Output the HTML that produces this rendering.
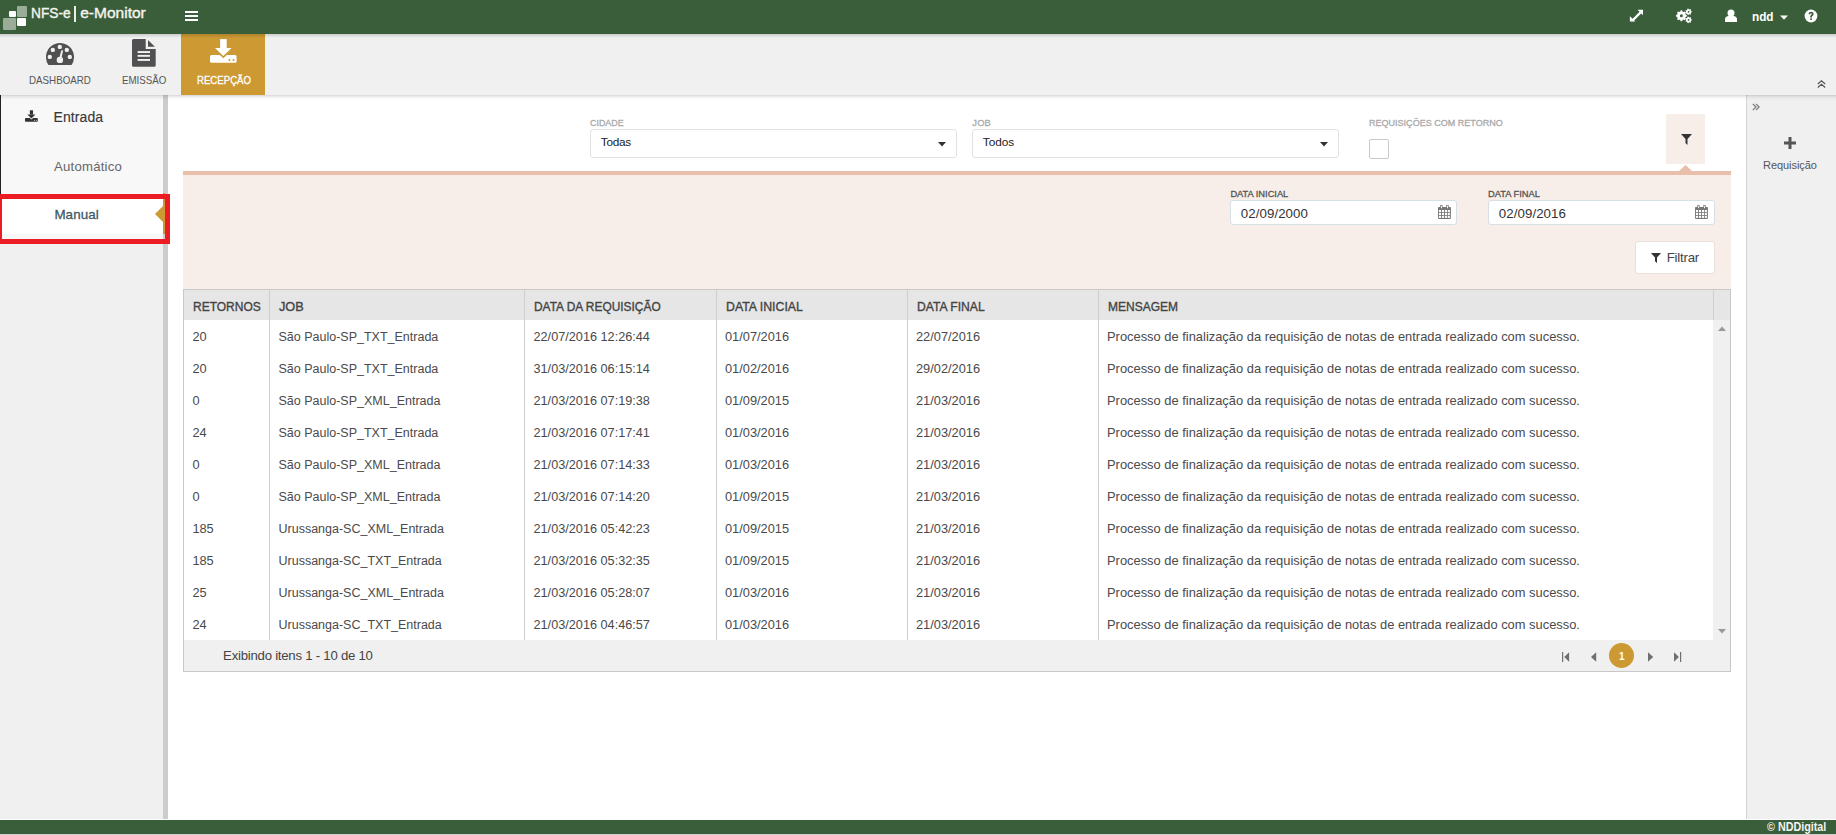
<!DOCTYPE html>
<html><head><meta charset="utf-8"><title>NFS-e | e-Monitor</title>
<style>
html,body{margin:0;padding:0;width:1836px;height:835px;overflow:hidden;background:#fff;font-family:"Liberation Sans",sans-serif;position:relative}
body>div{position:absolute}
.t{white-space:nowrap}
</style></head><body>
<div style="left:0px;top:0px;width:1836px;height:34px;background:#3a5e39"></div>
<div style="left:17px;top:6px;width:10px;height:11px;background:#9aad98;border-radius:1px"></div>
<div style="left:9px;top:11px;width:7px;height:6px;background:#fff;border-radius:1px"></div>
<div style="left:3px;top:18px;width:13px;height:12px;background:#9aad98;border-radius:1px"></div>
<div style="left:17px;top:18px;width:9px;height:8px;background:#fff;border-radius:1px"></div>
<div class="t" style="left:30.6px;top:2.63px;font-size:15.5px;line-height:20px;font-weight:normal;color:#f4f4f0;transform:scaleX(0.8850);transform-origin:0 0;-webkit-text-stroke:0.4px #f4f4f0">NFS-e</div>
<div style="left:74.4px;top:6px;width:1.6px;height:16px;background:#ecefe9"></div>
<div class="t" style="left:80.2px;top:2.63px;font-size:15.5px;line-height:20px;font-weight:normal;color:#f4f4f0;letter-spacing:0.012px;-webkit-text-stroke:0.4px #f4f4f0">e-Monitor</div>
<svg style="position:absolute;left:185px;top:11px" width="13" height="10" viewBox="0 0 13 10"><rect x="0" y="0" width="13" height="2" fill="#fff"/><rect x="0" y="4" width="13" height="2" fill="#fff"/><rect x="0" y="8" width="13" height="2" fill="#fff"/></svg>
<div style="left:0px;top:34px;width:1836px;height:61px;background:#f0f0f0"></div>
<div style="left:181px;top:34px;width:84px;height:61px;background:#cc9933"></div>
<div style="left:0px;top:34px;width:1836px;height:4px;background:linear-gradient(rgba(0,0,0,.15),rgba(0,0,0,0))"></div>
<div class="t" style="left:28.5px;top:72.92px;font-size:10.9px;line-height:14px;font-weight:normal;color:#555;transform:scaleX(0.8970);transform-origin:0 0;">DASHBOARD</div>
<div class="t" style="left:121.5px;top:72.82px;font-size:10.9px;line-height:14px;font-weight:normal;color:#555;transform:scaleX(0.8952);transform-origin:0 0;">EMISSÃO</div>
<div class="t" style="left:196.5px;top:72.82px;font-size:10.9px;line-height:14px;font-weight:normal;color:#fff;transform:scaleX(0.8838);transform-origin:0 0;-webkit-text-stroke:0.3px #fff">RECEPÇÃO</div>
<svg style="position:absolute;left:46px;top:43px" width="28" height="22" viewBox="0 0 28 22"><path d="M2.5 22 A14 14 0 1 1 25.5 22 Z" fill="#505050"/><circle cx="13.8" cy="3.9" r="2.2" fill="#f0f0f0"/><circle cx="6.8" cy="6.9" r="2.2" fill="#f0f0f0"/><circle cx="20.8" cy="6.9" r="2.2" fill="#f0f0f0"/><circle cx="3.8" cy="13.9" r="2.2" fill="#f0f0f0"/><circle cx="23.8" cy="13.9" r="2.2" fill="#f0f0f0"/><circle cx="13.9" cy="16.9" r="3.2" fill="#f0f0f0"/><path d="M12.9 16.5 L15.3 7.2 L17.1 7.6 L15.1 17 Z" fill="#f0f0f0"/></svg>
<svg style="position:absolute;left:132px;top:39px" width="24" height="28" viewBox="0 0 24 28"><path d="M1.5 0 H13.7 V10 H23.7 V26.2 A1.5 1.5 0 0 1 22.2 27.7 H1.5 A1.5 1.5 0 0 1 0 26.2 V1.5 A1.5 1.5 0 0 1 1.5 0 Z" fill="#505052"/><path d="M16 0.9 V7.8 H22.9 Z" fill="#505052"/><rect x="5.6" y="12.1" width="12.4" height="1.9" fill="#f0f0f0"/><rect x="5.6" y="15.9" width="12.4" height="1.9" fill="#f0f0f0"/><rect x="5.6" y="20" width="12.4" height="1.9" fill="#f0f0f0"/></svg>
<svg style="position:absolute;left:210px;top:39px" width="27" height="24" viewBox="0 0 27 24"><rect x="10.1" y="0.1" width="6.6" height="8.9" fill="#fff"/><path d="M5 8.9 H21.6 L13.3 17.1 Z" fill="#fff"/><path d="M1.5 16 H9.8 L13.3 19.3 L16.9 16 H25.1 A1.5 1.5 0 0 1 26.6 17.5 V22.3 A1.5 1.5 0 0 1 25.1 23.8 H1.5 A1.5 1.5 0 0 1 0 22.3 V17.5 A1.5 1.5 0 0 1 1.5 16 Z" fill="#fff"/><rect x="18.6" y="20.1" width="1.6" height="1.9" fill="#cc9933"/><rect x="22.7" y="20.1" width="1.6" height="1.9" fill="#cc9933"/></svg>
<svg style="position:absolute;left:1629px;top:9px" width="15" height="14" viewBox="0 0 15 14"><path d="M8.6 0.8 H14 V6.2 Z" fill="#fff"/><path d="M0.9 7.2 V12.6 H6.3 Z" fill="#fff"/><path d="M11.6 3.4 L3.4 11.6" stroke="#fff" stroke-width="2.2"/></svg>
<svg style="position:absolute;left:1674px;top:8px" width="20" height="17" viewBox="0 0 20 17"><path fill="#fff" fill-rule="evenodd" d="M11.80 6.84 L12.85 7.05 L12.85 8.55 L11.80 8.76 L11.19 10.23 L11.79 11.12 L10.72 12.19 L9.83 11.59 L8.36 12.20 L8.15 13.25 L6.65 13.25 L6.44 12.20 L4.97 11.59 L4.08 12.19 L3.01 11.12 L3.61 10.23 L3.00 8.76 L1.95 8.55 L1.95 7.05 L3.00 6.84 L3.61 5.37 L3.01 4.48 L4.08 3.41 L4.97 4.01 L6.44 3.40 L6.65 2.35 L8.15 2.35 L8.36 3.40 L9.83 4.01 L10.72 3.41 L11.79 4.48 L11.19 5.37 Z M8.90 7.80 A1.5 1.5 0 1 0 5.90 7.80 A1.5 1.5 0 1 0 8.90 7.80 Z M17.12 3.16 L17.86 3.28 L17.86 4.32 L17.12 4.44 L16.67 5.38 L17.04 6.03 L16.23 6.67 L15.68 6.17 L14.66 6.40 L14.38 7.09 L13.37 6.86 L13.42 6.12 L12.60 5.47 L11.89 5.68 L11.44 4.75 L12.05 4.32 L12.05 3.28 L11.44 2.85 L11.89 1.92 L12.60 2.13 L13.42 1.48 L13.37 0.74 L14.38 0.51 L14.66 1.20 L15.68 1.43 L16.23 0.93 L17.04 1.57 L16.67 2.22 Z M15.50 3.80 A0.9 0.9 0 1 0 13.70 3.80 A0.9 0.9 0 1 0 15.50 3.80 Z M17.12 11.26 L17.86 11.38 L17.86 12.42 L17.12 12.54 L16.67 13.48 L17.04 14.13 L16.23 14.77 L15.68 14.27 L14.66 14.50 L14.38 15.19 L13.37 14.96 L13.42 14.22 L12.60 13.57 L11.89 13.78 L11.44 12.85 L12.05 12.42 L12.05 11.38 L11.44 10.95 L11.89 10.02 L12.60 10.23 L13.42 9.58 L13.37 8.84 L14.38 8.61 L14.66 9.30 L15.68 9.53 L16.23 9.03 L17.04 9.67 L16.67 10.32 Z M15.50 11.90 A0.9 0.9 0 1 0 13.70 11.90 A0.9 0.9 0 1 0 15.50 11.90 Z"/></svg>
<svg style="position:absolute;left:1725px;top:9px" width="13" height="14" viewBox="0 0 13 14"><circle cx="6" cy="4.1" r="3.5" fill="#fff"/><path d="M0 13 V10.5 C0 8.2 1.5 7 3.5 7 H8.5 C10.5 7 12 8.2 12 10.5 V13 Z" fill="#fff"/></svg>
<div class="t" style="left:1751.5px;top:7.93px;font-size:13.2px;line-height:17px;font-weight:bold;color:#fff;transform:scaleX(0.8917);transform-origin:0 0;">ndd</div>
<svg style="position:absolute;left:1780px;top:15px" width="8" height="5" viewBox="0 0 8 5"><path d="M0 0.5 H8 L4 4.8 Z" fill="#fff"/></svg>
<svg style="position:absolute;left:1804px;top:9px" width="14" height="14" viewBox="0 0 14 14"><circle cx="7" cy="7" r="6.4" fill="#fff"/><path d="M4.6 5.2 C4.6 3.6 5.7 2.8 7.1 2.8 C8.6 2.8 9.6 3.7 9.6 5 C9.6 6.6 7.9 6.8 7.9 8 V8.4 H6.2 V7.8 C6.2 6.2 7.8 6 7.8 5.1 C7.8 4.6 7.5 4.3 7 4.3 C6.5 4.3 6.2 4.7 6.2 5.2 Z" fill="#3a5e39"/><rect x="6.2" y="9.3" width="1.7" height="1.7" fill="#3a5e39"/></svg>
<svg style="position:absolute;left:1817px;top:80px" width="9" height="8" viewBox="0 0 9 8"><path d="M0.8 4 L4.5 0.8 L8.2 4 M0.8 7.5 L4.5 4.3 L8.2 7.5" fill="none" stroke="#555" stroke-width="1.2"/></svg>
<div style="left:0px;top:95px;width:163px;height:724px;background:#f0f0f0"></div>
<div style="left:0px;top:95px;width:163px;height:99px;background:#f8f8f8"></div>
<div style="left:0px;top:95px;width:1px;height:99px;background:#222"></div>
<div style="left:163px;top:95px;width:5px;height:724px;background:#cccccc"></div>
<div style="left:0px;top:194px;width:163px;height:40px;background:#fff"></div>
<div style="left:0px;top:234px;width:163px;height:5px;background:#f8f8f8"></div>
<div style="left:163px;top:193px;width:2px;height:41px;background:#cc9933"></div>
<svg style="position:absolute;left:155px;top:206px" width="8" height="16" viewBox="0 0 8 16"><path d="M8 0 L0 8 L8 16 Z" fill="#cc9933"/></svg>
<svg style="position:absolute;left:25px;top:110px" width="13" height="12" viewBox="0 0 27 24"><rect x="10.1" y="0.1" width="6.6" height="8.9" fill="#333"/><path d="M5 8.9 H21.6 L13.3 17.1 Z" fill="#333"/><path d="M1.5 16 H9.8 L13.3 19.3 L16.9 16 H25.1 A1.5 1.5 0 0 1 26.6 17.5 V22.3 A1.5 1.5 0 0 1 25.1 23.8 H1.5 A1.5 1.5 0 0 1 0 22.3 V17.5 A1.5 1.5 0 0 1 1.5 16 Z" fill="#333"/><rect x="18.6" y="20.1" width="1.6" height="1.9" fill="#f8f8f8"/><rect x="22.7" y="20.1" width="1.6" height="1.9" fill="#f8f8f8"/></svg>
<div class="t" style="left:53.5px;top:108.35px;font-size:14px;line-height:18px;font-weight:normal;color:#383838;letter-spacing:0.092px;-webkit-text-stroke:0.15px #383838">Entrada</div>
<div class="t" style="left:54px;top:157.83px;font-size:13.2px;line-height:17px;font-weight:normal;color:#666;letter-spacing:0.207px;">Automático</div>
<div class="t" style="left:54.4px;top:205.66px;font-size:13.4px;line-height:17px;font-weight:normal;color:#3f5a66;letter-spacing:0.071px;-webkit-text-stroke:0.3px #3f5a66">Manual</div>
<div style="left:1746px;top:95px;width:90px;height:724px;background:#f0f0f0;border-left:1px solid #d4d4d4;box-sizing:border-box"></div>
<svg style="position:absolute;left:1752px;top:103px" width="8" height="8" viewBox="0 0 8 8"><path d="M0.8 0.8 L4 4 L0.8 7.2 M4 0.8 L7.2 4 L4 7.2" fill="none" stroke="#777" stroke-width="1.2"/></svg>
<svg style="position:absolute;left:1784px;top:137px" width="12" height="12" viewBox="0 0 12 12"><rect x="4.5" y="0" width="3" height="12" fill="#555"/><rect x="0" y="4.5" width="12" height="3" fill="#555"/></svg>
<div class="t" style="left:1763px;top:157.89px;font-size:11px;line-height:14px;font-weight:normal;color:#555;letter-spacing:-0.056px;">Requisição</div>
<div class="t" style="left:590.3px;top:117.28px;font-size:9.3px;line-height:12px;font-weight:normal;color:#aaa;transform:scaleX(0.9592);transform-origin:0 0;-webkit-text-stroke:0.3px #aaa">CIDADE</div>
<div style="left:590px;top:129px;width:367px;height:29px;background:#fff;border:1px solid #e2e2e2;border-radius:3px;box-sizing:border-box"></div>
<div class="t" style="left:600.8px;top:135.11px;font-size:11.8px;line-height:15px;font-weight:normal;color:#222;letter-spacing:-0.295px;">Todas</div>
<svg style="position:absolute;left:938px;top:142px" width="8" height="5" viewBox="0 0 8 5"><path d="M0 0 H8 L4 4.5 Z" fill="#333"/></svg>
<div class="t" style="left:972.3px;top:117.28px;font-size:9.3px;line-height:12px;font-weight:normal;color:#aaa;letter-spacing:0.210px;-webkit-text-stroke:0.3px #aaa">JOB</div>
<div style="left:972px;top:129px;width:367px;height:29px;background:#fff;border:1px solid #e2e2e2;border-radius:3px;box-sizing:border-box"></div>
<div class="t" style="left:982.8px;top:135.11px;font-size:11.8px;line-height:15px;font-weight:normal;color:#222;letter-spacing:-0.020px;">Todos</div>
<svg style="position:absolute;left:1320px;top:142px" width="8" height="5" viewBox="0 0 8 5"><path d="M0 0 H8 L4 4.5 Z" fill="#333"/></svg>
<div class="t" style="left:1369.2px;top:116.68px;font-size:9.3px;line-height:12px;font-weight:normal;color:#aaa;transform:scaleX(0.9708);transform-origin:0 0;-webkit-text-stroke:0.3px #aaa">REQUISIÇÕES COM RETORNO</div>
<div style="left:1369px;top:139px;width:20px;height:20px;background:#fff;border:1px solid #c9c9c9;border-radius:2px;box-sizing:border-box"></div>
<div style="left:1666px;top:114px;width:39px;height:50px;background:#f8eee9"></div>
<svg style="position:absolute;left:1681px;top:134px" width="11" height="11" viewBox="0 0 11 11"><path d="M0 0 H11 L6.5 5 V11 L4.5 9 V5 Z" fill="#333"/></svg>
<svg style="position:absolute;left:1679px;top:165px" width="13" height="6" viewBox="0 0 13 6"><path d="M0 6 L6.5 0 L13 6 Z" fill="#e9bfab"/></svg>
<div style="left:183px;top:171px;width:1548px;height:4px;background:#e9bfab"></div>
<div style="left:183px;top:175px;width:1548px;height:114px;background:#f8eee9"></div>
<div class="t" style="left:1230.4px;top:187.78px;font-size:9.3px;line-height:12px;font-weight:normal;color:#555;letter-spacing:-0.016px;-webkit-text-stroke:0.3px #555">DATA INICIAL</div>
<div style="left:1230px;top:200px;width:227px;height:25px;background:#fff;border:1px solid #d6dfe3;border-radius:3px;box-sizing:border-box"></div>
<div class="t" style="left:1240.8px;top:204.99px;font-size:13.3px;line-height:17px;font-weight:normal;color:#333;letter-spacing:0.061px;">02/09/2000</div>
<svg style="position:absolute;left:1438px;top:205px" width="13" height="14" viewBox="0 0 13 14"><rect x="0" y="2.1" width="12.9" height="11.8" rx="0.8" fill="#777"/><g fill="#fff"><rect x="0.9" y="5" width="2.1" height="2.1"/><rect x="3.9" y="5" width="2.1" height="2.1"/><rect x="6.9" y="5" width="2.1" height="2.1"/><rect x="9.8" y="5" width="2.1" height="2.1"/><rect x="0.9" y="7.9" width="2.1" height="2.1"/><rect x="3.9" y="7.9" width="2.1" height="2.1"/><rect x="6.9" y="7.9" width="2.1" height="2.1"/><rect x="9.8" y="7.9" width="2.1" height="2.1"/><rect x="0.9" y="10.8" width="2.1" height="2.1"/><rect x="3.9" y="10.8" width="2.1" height="2.1"/><rect x="6.9" y="10.8" width="2.1" height="2.1"/><rect x="9.8" y="10.8" width="2.1" height="2.1"/></g><rect x="2.2" y="0" width="2.4" height="3.4" rx="0.6" fill="#777"/><rect x="8.3" y="0" width="2.4" height="3.4" rx="0.6" fill="#777"/><rect x="2.95" y="0.8" width="0.9" height="2.4" fill="#fff"/><rect x="9.05" y="0.8" width="0.9" height="2.4" fill="#fff"/></svg>
<div class="t" style="left:1488px;top:187.78px;font-size:9.3px;line-height:12px;font-weight:normal;color:#555;transform:scaleX(1.0024);transform-origin:0 0;-webkit-text-stroke:0.3px #555">DATA FINAL</div>
<div style="left:1488px;top:200px;width:227px;height:25px;background:#fff;border:1px solid #d6dfe3;border-radius:3px;box-sizing:border-box"></div>
<div class="t" style="left:1498.8px;top:204.99px;font-size:13.3px;line-height:17px;font-weight:normal;color:#333;letter-spacing:0.061px;">02/09/2016</div>
<svg style="position:absolute;left:1695px;top:205px" width="13" height="14" viewBox="0 0 13 14"><rect x="0" y="2.1" width="12.9" height="11.8" rx="0.8" fill="#777"/><g fill="#fff"><rect x="0.9" y="5" width="2.1" height="2.1"/><rect x="3.9" y="5" width="2.1" height="2.1"/><rect x="6.9" y="5" width="2.1" height="2.1"/><rect x="9.8" y="5" width="2.1" height="2.1"/><rect x="0.9" y="7.9" width="2.1" height="2.1"/><rect x="3.9" y="7.9" width="2.1" height="2.1"/><rect x="6.9" y="7.9" width="2.1" height="2.1"/><rect x="9.8" y="7.9" width="2.1" height="2.1"/><rect x="0.9" y="10.8" width="2.1" height="2.1"/><rect x="3.9" y="10.8" width="2.1" height="2.1"/><rect x="6.9" y="10.8" width="2.1" height="2.1"/><rect x="9.8" y="10.8" width="2.1" height="2.1"/></g><rect x="2.2" y="0" width="2.4" height="3.4" rx="0.6" fill="#777"/><rect x="8.3" y="0" width="2.4" height="3.4" rx="0.6" fill="#777"/><rect x="2.95" y="0.8" width="0.9" height="2.4" fill="#fff"/><rect x="9.05" y="0.8" width="0.9" height="2.4" fill="#fff"/></svg>
<div style="left:1635px;top:241px;width:80px;height:33px;background:#fff;border:1px solid #eadfda;border-radius:3px;box-sizing:border-box"></div>
<svg style="position:absolute;left:1651px;top:253px" width="10" height="10" viewBox="0 0 10 10"><path d="M0 0 H10 L6 4.6 V10 L4 8.2 V4.6 Z" fill="#333"/></svg>
<div class="t" style="left:1666.7px;top:249.29px;font-size:13.3px;line-height:17px;font-weight:normal;color:#444;letter-spacing:-0.241px;">Filtrar</div>
<div style="left:183px;top:289px;width:1548px;height:383px;background:#fff;border:1px solid #c8c8c8;box-sizing:border-box"></div>
<div style="left:184px;top:290px;width:1546px;height:30px;background:#e6e6e6"></div>
<div style="left:184px;top:640px;width:1546px;height:31px;background:#f0f0f0"></div>
<div style="left:1713px;top:320px;width:17px;height:320px;background:#f0f0f0"></div>
<div style="left:269px;top:290px;width:1px;height:350px;background:#cfcfcf"></div>
<div style="left:524px;top:290px;width:1px;height:350px;background:#cfcfcf"></div>
<div style="left:716px;top:290px;width:1px;height:350px;background:#cfcfcf"></div>
<div style="left:907px;top:290px;width:1px;height:350px;background:#cfcfcf"></div>
<div style="left:1098px;top:290px;width:1px;height:350px;background:#cfcfcf"></div>
<div style="left:1713px;top:290px;width:1px;height:30px;background:#cfcfcf"></div>
<div class="t" style="left:193px;top:298.67px;font-size:12.5px;line-height:16px;font-weight:normal;color:#444;transform:scaleX(0.9600);transform-origin:0 0;-webkit-text-stroke:0.35px #444">RETORNOS</div>
<div class="t" style="left:279px;top:298.67px;font-size:12.5px;line-height:16px;font-weight:normal;color:#444;transform:scaleX(1.0178);transform-origin:0 0;-webkit-text-stroke:0.35px #444">JOB</div>
<div class="t" style="left:534px;top:298.67px;font-size:12.5px;line-height:16px;font-weight:normal;color:#444;transform:scaleX(0.9532);transform-origin:0 0;-webkit-text-stroke:0.35px #444">DATA DA REQUISIÇÃO</div>
<div class="t" style="left:725.5px;top:298.67px;font-size:12.5px;line-height:16px;font-weight:normal;color:#444;transform:scaleX(0.9850);transform-origin:0 0;-webkit-text-stroke:0.35px #444">DATA INICIAL</div>
<div class="t" style="left:916.5px;top:298.67px;font-size:12.5px;line-height:16px;font-weight:normal;color:#444;transform:scaleX(0.9708);transform-origin:0 0;-webkit-text-stroke:0.35px #444">DATA FINAL</div>
<div class="t" style="left:1107.5px;top:298.67px;font-size:12.5px;line-height:16px;font-weight:normal;color:#444;transform:scaleX(0.9593);transform-origin:0 0;-webkit-text-stroke:0.35px #444">MENSAGEM</div>
<div class="t" style="left:192.4px;top:327.86px;font-size:12.8px;line-height:17px;font-weight:normal;color:#4a4a4a;">20</div>
<div class="t" style="left:278.5px;top:328.67px;font-size:12.5px;line-height:16px;font-weight:normal;color:#4a4a4a;">São Paulo-SP_TXT_Entrada</div>
<div class="t" style="left:533.5px;top:328.50px;font-size:12.7px;line-height:17px;font-weight:normal;color:#4a4a4a;">22/07/2016 12:26:44</div>
<div class="t" style="left:725px;top:327.86px;font-size:12.8px;line-height:17px;font-weight:normal;color:#4a4a4a;">01/07/2016</div>
<div class="t" style="left:916px;top:327.86px;font-size:12.8px;line-height:17px;font-weight:normal;color:#4a4a4a;">22/07/2016</div>
<div class="t" style="left:1107px;top:327.83px;font-size:12.9px;line-height:17px;font-weight:normal;color:#4a4a4a;">Processo de finalização da requisição de notas de entrada realizado com sucesso.</div>
<div class="t" style="left:192.4px;top:359.86px;font-size:12.8px;line-height:17px;font-weight:normal;color:#4a4a4a;">20</div>
<div class="t" style="left:278.5px;top:360.67px;font-size:12.5px;line-height:16px;font-weight:normal;color:#4a4a4a;">São Paulo-SP_TXT_Entrada</div>
<div class="t" style="left:533.5px;top:360.50px;font-size:12.7px;line-height:17px;font-weight:normal;color:#4a4a4a;">31/03/2016 06:15:14</div>
<div class="t" style="left:725px;top:359.86px;font-size:12.8px;line-height:17px;font-weight:normal;color:#4a4a4a;">01/02/2016</div>
<div class="t" style="left:916px;top:359.86px;font-size:12.8px;line-height:17px;font-weight:normal;color:#4a4a4a;">29/02/2016</div>
<div class="t" style="left:1107px;top:359.83px;font-size:12.9px;line-height:17px;font-weight:normal;color:#4a4a4a;">Processo de finalização da requisição de notas de entrada realizado com sucesso.</div>
<div class="t" style="left:192.4px;top:391.86px;font-size:12.8px;line-height:17px;font-weight:normal;color:#4a4a4a;">0</div>
<div class="t" style="left:278.5px;top:392.67px;font-size:12.5px;line-height:16px;font-weight:normal;color:#4a4a4a;">São Paulo-SP_XML_Entrada</div>
<div class="t" style="left:533.5px;top:392.50px;font-size:12.7px;line-height:17px;font-weight:normal;color:#4a4a4a;">21/03/2016 07:19:38</div>
<div class="t" style="left:725px;top:391.86px;font-size:12.8px;line-height:17px;font-weight:normal;color:#4a4a4a;">01/09/2015</div>
<div class="t" style="left:916px;top:391.86px;font-size:12.8px;line-height:17px;font-weight:normal;color:#4a4a4a;">21/03/2016</div>
<div class="t" style="left:1107px;top:391.83px;font-size:12.9px;line-height:17px;font-weight:normal;color:#4a4a4a;">Processo de finalização da requisição de notas de entrada realizado com sucesso.</div>
<div class="t" style="left:192.4px;top:423.86px;font-size:12.8px;line-height:17px;font-weight:normal;color:#4a4a4a;">24</div>
<div class="t" style="left:278.5px;top:424.67px;font-size:12.5px;line-height:16px;font-weight:normal;color:#4a4a4a;">São Paulo-SP_TXT_Entrada</div>
<div class="t" style="left:533.5px;top:424.50px;font-size:12.7px;line-height:17px;font-weight:normal;color:#4a4a4a;">21/03/2016 07:17:41</div>
<div class="t" style="left:725px;top:423.86px;font-size:12.8px;line-height:17px;font-weight:normal;color:#4a4a4a;">01/03/2016</div>
<div class="t" style="left:916px;top:423.86px;font-size:12.8px;line-height:17px;font-weight:normal;color:#4a4a4a;">21/03/2016</div>
<div class="t" style="left:1107px;top:423.83px;font-size:12.9px;line-height:17px;font-weight:normal;color:#4a4a4a;">Processo de finalização da requisição de notas de entrada realizado com sucesso.</div>
<div class="t" style="left:192.4px;top:455.86px;font-size:12.8px;line-height:17px;font-weight:normal;color:#4a4a4a;">0</div>
<div class="t" style="left:278.5px;top:456.67px;font-size:12.5px;line-height:16px;font-weight:normal;color:#4a4a4a;">São Paulo-SP_XML_Entrada</div>
<div class="t" style="left:533.5px;top:456.50px;font-size:12.7px;line-height:17px;font-weight:normal;color:#4a4a4a;">21/03/2016 07:14:33</div>
<div class="t" style="left:725px;top:455.86px;font-size:12.8px;line-height:17px;font-weight:normal;color:#4a4a4a;">01/03/2016</div>
<div class="t" style="left:916px;top:455.86px;font-size:12.8px;line-height:17px;font-weight:normal;color:#4a4a4a;">21/03/2016</div>
<div class="t" style="left:1107px;top:455.83px;font-size:12.9px;line-height:17px;font-weight:normal;color:#4a4a4a;">Processo de finalização da requisição de notas de entrada realizado com sucesso.</div>
<div class="t" style="left:192.4px;top:487.86px;font-size:12.8px;line-height:17px;font-weight:normal;color:#4a4a4a;">0</div>
<div class="t" style="left:278.5px;top:488.67px;font-size:12.5px;line-height:16px;font-weight:normal;color:#4a4a4a;">São Paulo-SP_XML_Entrada</div>
<div class="t" style="left:533.5px;top:488.50px;font-size:12.7px;line-height:17px;font-weight:normal;color:#4a4a4a;">21/03/2016 07:14:20</div>
<div class="t" style="left:725px;top:487.86px;font-size:12.8px;line-height:17px;font-weight:normal;color:#4a4a4a;">01/09/2015</div>
<div class="t" style="left:916px;top:487.86px;font-size:12.8px;line-height:17px;font-weight:normal;color:#4a4a4a;">21/03/2016</div>
<div class="t" style="left:1107px;top:487.83px;font-size:12.9px;line-height:17px;font-weight:normal;color:#4a4a4a;">Processo de finalização da requisição de notas de entrada realizado com sucesso.</div>
<div class="t" style="left:192.4px;top:519.86px;font-size:12.8px;line-height:17px;font-weight:normal;color:#4a4a4a;">185</div>
<div class="t" style="left:278.5px;top:520.67px;font-size:12.5px;line-height:16px;font-weight:normal;color:#4a4a4a;">Urussanga-SC_XML_Entrada</div>
<div class="t" style="left:533.5px;top:520.50px;font-size:12.7px;line-height:17px;font-weight:normal;color:#4a4a4a;">21/03/2016 05:42:23</div>
<div class="t" style="left:725px;top:519.86px;font-size:12.8px;line-height:17px;font-weight:normal;color:#4a4a4a;">01/09/2015</div>
<div class="t" style="left:916px;top:519.86px;font-size:12.8px;line-height:17px;font-weight:normal;color:#4a4a4a;">21/03/2016</div>
<div class="t" style="left:1107px;top:519.83px;font-size:12.9px;line-height:17px;font-weight:normal;color:#4a4a4a;">Processo de finalização da requisição de notas de entrada realizado com sucesso.</div>
<div class="t" style="left:192.4px;top:551.86px;font-size:12.8px;line-height:17px;font-weight:normal;color:#4a4a4a;">185</div>
<div class="t" style="left:278.5px;top:552.67px;font-size:12.5px;line-height:16px;font-weight:normal;color:#4a4a4a;">Urussanga-SC_TXT_Entrada</div>
<div class="t" style="left:533.5px;top:552.50px;font-size:12.7px;line-height:17px;font-weight:normal;color:#4a4a4a;">21/03/2016 05:32:35</div>
<div class="t" style="left:725px;top:551.86px;font-size:12.8px;line-height:17px;font-weight:normal;color:#4a4a4a;">01/09/2015</div>
<div class="t" style="left:916px;top:551.86px;font-size:12.8px;line-height:17px;font-weight:normal;color:#4a4a4a;">21/03/2016</div>
<div class="t" style="left:1107px;top:551.83px;font-size:12.9px;line-height:17px;font-weight:normal;color:#4a4a4a;">Processo de finalização da requisição de notas de entrada realizado com sucesso.</div>
<div class="t" style="left:192.4px;top:583.86px;font-size:12.8px;line-height:17px;font-weight:normal;color:#4a4a4a;">25</div>
<div class="t" style="left:278.5px;top:584.67px;font-size:12.5px;line-height:16px;font-weight:normal;color:#4a4a4a;">Urussanga-SC_XML_Entrada</div>
<div class="t" style="left:533.5px;top:584.50px;font-size:12.7px;line-height:17px;font-weight:normal;color:#4a4a4a;">21/03/2016 05:28:07</div>
<div class="t" style="left:725px;top:583.86px;font-size:12.8px;line-height:17px;font-weight:normal;color:#4a4a4a;">01/03/2016</div>
<div class="t" style="left:916px;top:583.86px;font-size:12.8px;line-height:17px;font-weight:normal;color:#4a4a4a;">21/03/2016</div>
<div class="t" style="left:1107px;top:583.83px;font-size:12.9px;line-height:17px;font-weight:normal;color:#4a4a4a;">Processo de finalização da requisição de notas de entrada realizado com sucesso.</div>
<div class="t" style="left:192.4px;top:615.86px;font-size:12.8px;line-height:17px;font-weight:normal;color:#4a4a4a;">24</div>
<div class="t" style="left:278.5px;top:616.67px;font-size:12.5px;line-height:16px;font-weight:normal;color:#4a4a4a;">Urussanga-SC_TXT_Entrada</div>
<div class="t" style="left:533.5px;top:616.50px;font-size:12.7px;line-height:17px;font-weight:normal;color:#4a4a4a;">21/03/2016 04:46:57</div>
<div class="t" style="left:725px;top:615.86px;font-size:12.8px;line-height:17px;font-weight:normal;color:#4a4a4a;">01/03/2016</div>
<div class="t" style="left:916px;top:615.86px;font-size:12.8px;line-height:17px;font-weight:normal;color:#4a4a4a;">21/03/2016</div>
<div class="t" style="left:1107px;top:615.83px;font-size:12.9px;line-height:17px;font-weight:normal;color:#4a4a4a;">Processo de finalização da requisição de notas de entrada realizado com sucesso.</div>
<svg style="position:absolute;left:1718px;top:326px" width="8" height="5" viewBox="0 0 8 5"><path d="M0 5 L4 0.5 L8 5 Z" fill="#999"/></svg>
<svg style="position:absolute;left:1718px;top:629px" width="8" height="5" viewBox="0 0 8 5"><path d="M0 0 H8 L4 4.5 Z" fill="#999"/></svg>
<div class="t" style="left:223.1px;top:646.73px;font-size:13.2px;line-height:17px;font-weight:normal;color:#444;letter-spacing:-0.243px;">Exibindo itens 1 - 10 de 10</div>
<svg style="position:absolute;left:1609px;top:643px" width="25" height="25" viewBox="0 0 25 25"><circle cx="12.5" cy="12.5" r="12.5" fill="#cc9933"/></svg>
<div class="t" style="left:1619.1px;top:650.34px;font-size:10px;line-height:13px;font-weight:bold;color:#fff;">1</div>
<svg style="position:absolute;left:1562px;top:652px" width="8" height="10" viewBox="0 0 8 10"><rect x="0" y="0" width="1.2" height="10" fill="#6f6f6f"/><path d="M7.1 0.2 V9.8 L2.2 5 Z" fill="#6f6f6f"/></svg>
<svg style="position:absolute;left:1591px;top:652px" width="6" height="10" viewBox="0 0 6 10"><path d="M5.2 0.2 V9.8 L0 5 Z" fill="#6f6f6f"/></svg>
<svg style="position:absolute;left:1648px;top:652px" width="6" height="10" viewBox="0 0 6 10"><path d="M0 0.2 V9.8 L5.2 5 Z" fill="#6f6f6f"/></svg>
<svg style="position:absolute;left:1674px;top:652px" width="8" height="10" viewBox="0 0 8 10"><path d="M0 0.2 V9.8 L4.9 5 Z" fill="#6f6f6f"/><rect x="6" y="0" width="1.2" height="10" fill="#6f6f6f"/></svg>
<div style="left:0px;top:95px;width:1836px;height:5px;background:linear-gradient(rgba(0,0,0,.16),rgba(0,0,0,.05) 40%,rgba(0,0,0,0))"></div>
<div style="left:0px;top:820px;width:1836px;height:14px;background:#3a5e39"></div>
<div style="left:0px;top:834px;width:1836px;height:1px;background:#cfcfcf"></div>
<div class="t" style="left:1766.8px;top:819.14px;font-size:12px;line-height:16px;font-weight:bold;color:#f2f2f2;transform:scaleX(0.8961);transform-origin:0 0;">© NDDigital</div>
<div style="left:-3px;top:194px;width:173px;height:50px;border:5px solid #ec1c24;box-sizing:border-box"></div>
</body></html>
